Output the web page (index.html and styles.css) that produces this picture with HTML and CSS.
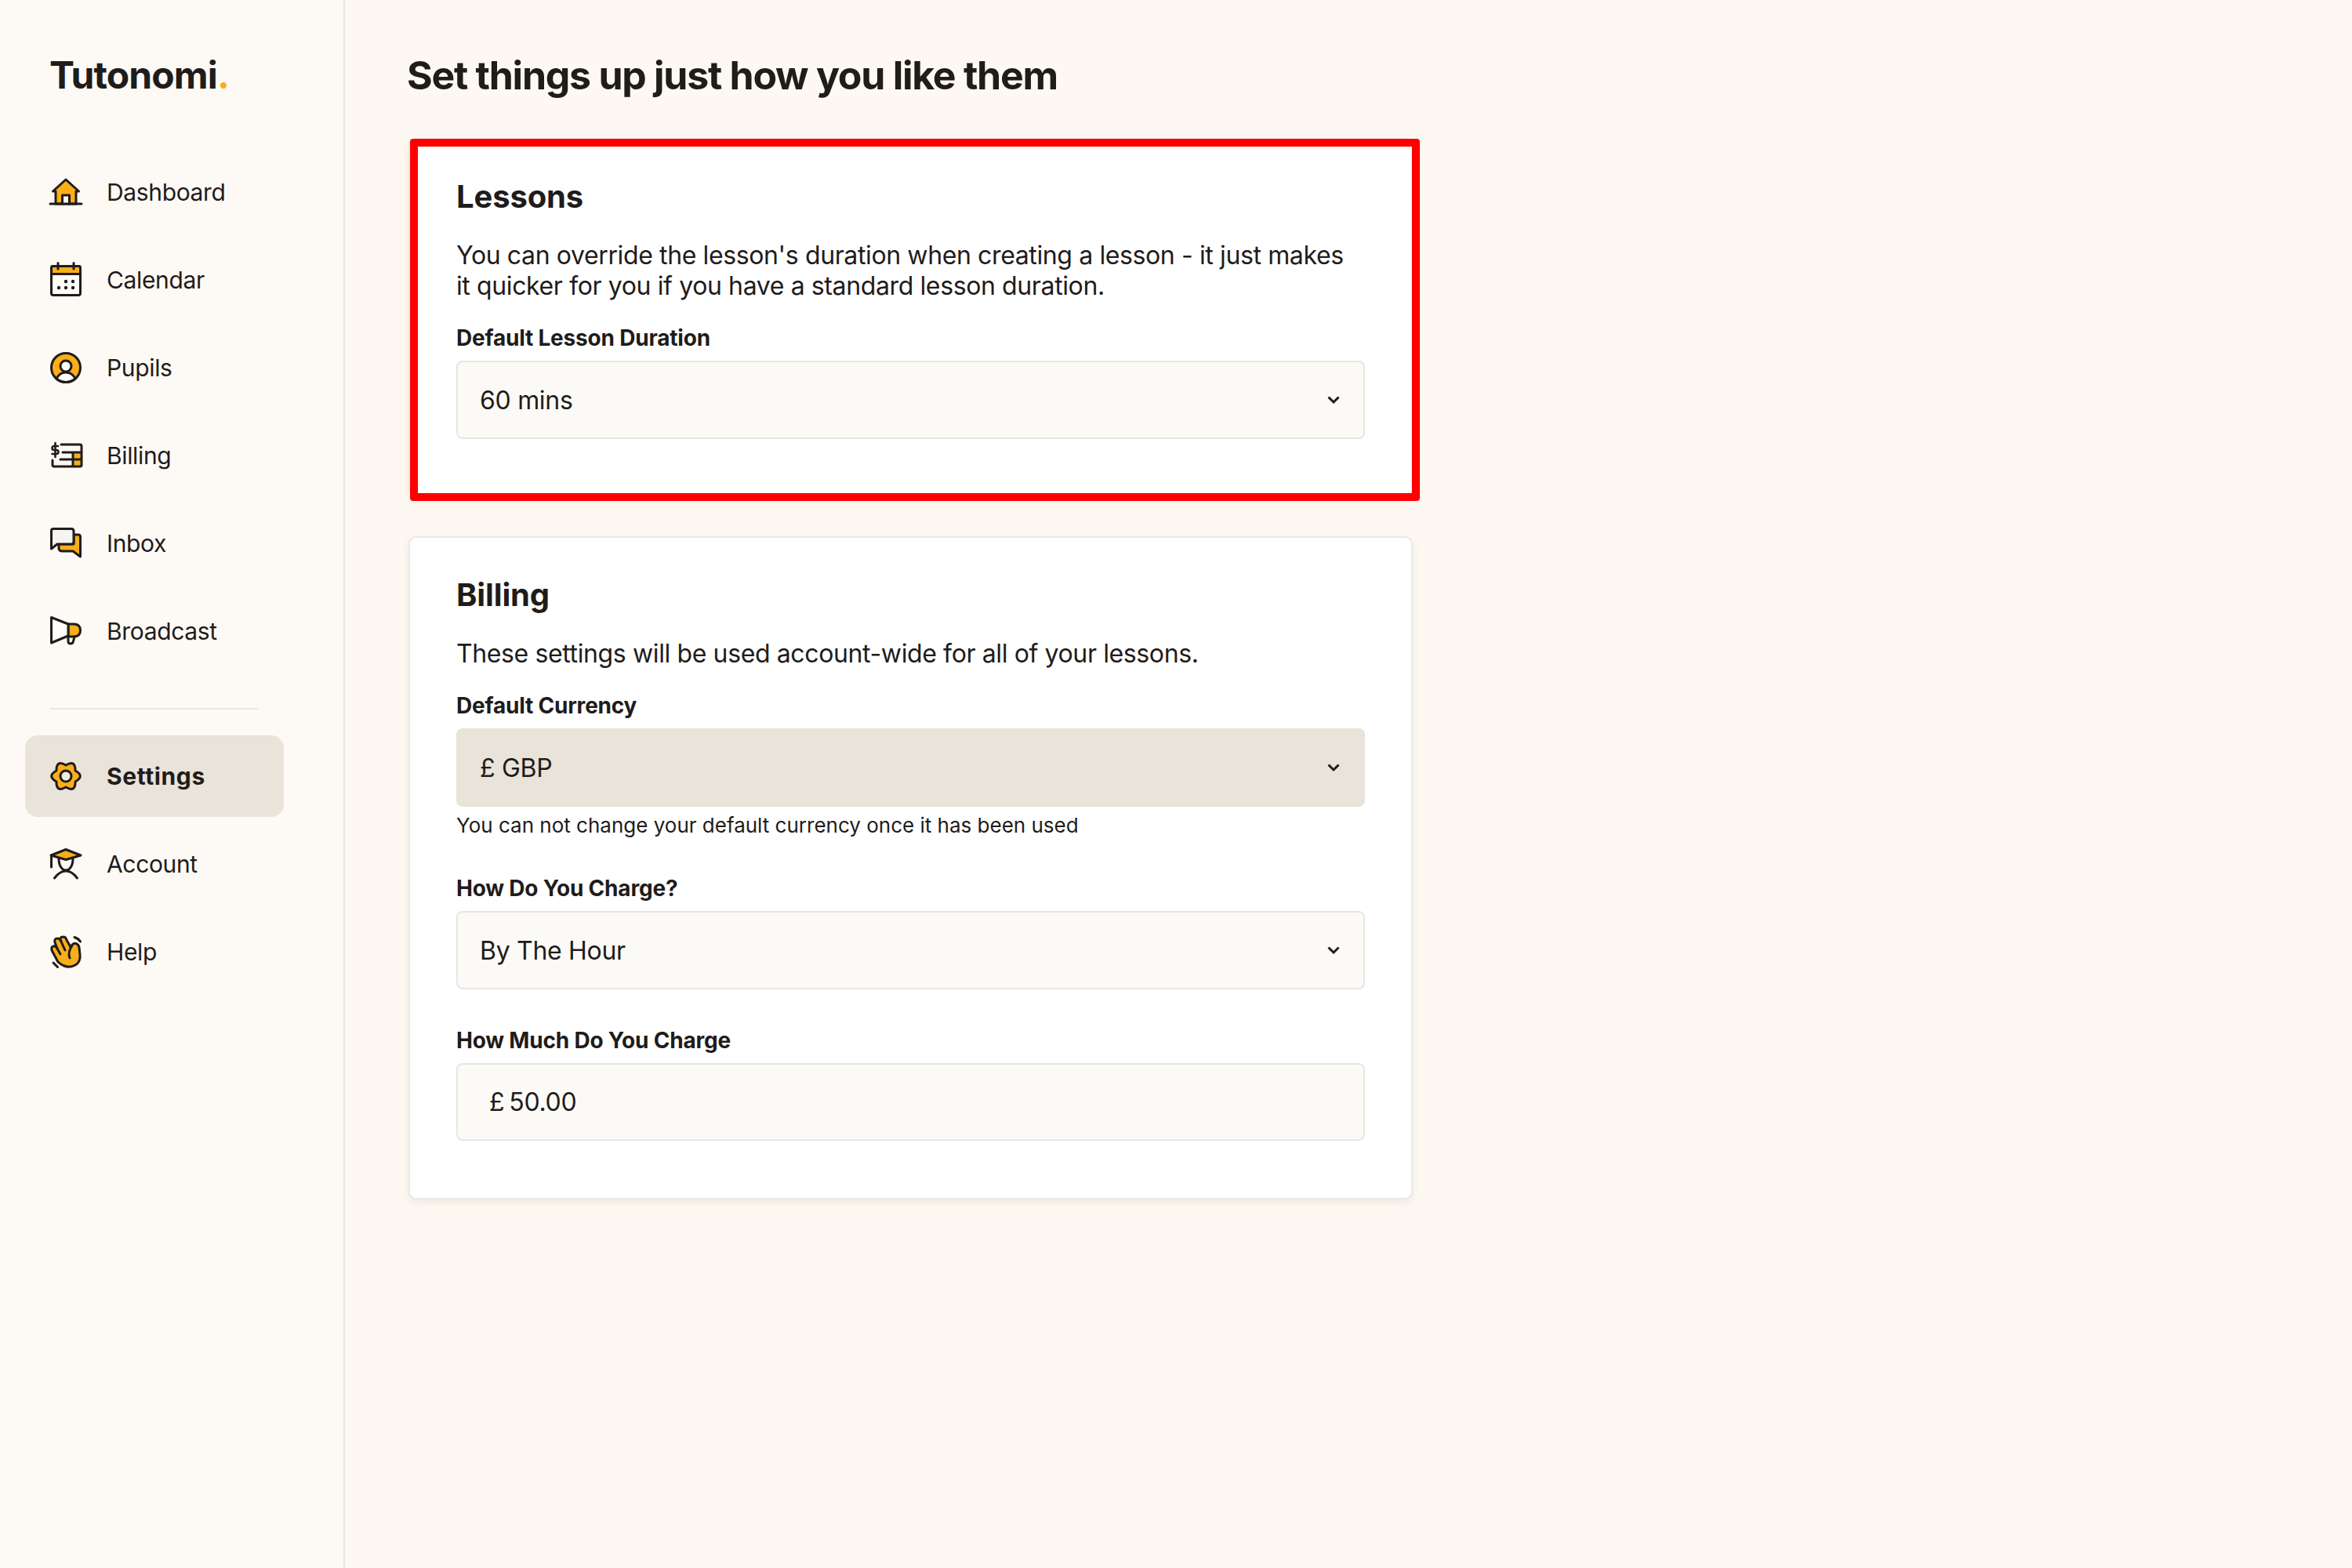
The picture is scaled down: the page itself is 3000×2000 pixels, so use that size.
FILE: index.html
```html
<!DOCTYPE html>
<html lang="en">
<head>
    <meta charset="UTF-8">
    <title>Tutonomi - Settings</title>
    <link rel="stylesheet" href="styles.css">
</head>
<body>
<aside class="sidebar">
    <div class="logo">Tutonomi<span class="logo-dot">.</span></div>
    <nav class="nav">
        <a class="nav-item">
            <svg class="nav-icon" viewBox="0 0 40 40">
                <path class="fill-o" d="M20 4 L3.5 19 H7 V35 H33 V19 H36.5 Z"/>
                <path class="fill-w" d="M15.5 35 V24 H24.5 V35"/>
                <path class="line" d="M0 35 H40"/>
            </svg>
            Dashboard
        </a>
        <a class="nav-item">
            <svg class="nav-icon" viewBox="0 0 40 40">
                <rect class="fill-w" x="1.5" y="2.5" width="37" height="37" rx="2.5"/>
                <path class="fill-o" d="M1.5 5 Q1.5 2.5 4 2.5 H36 Q38.5 2.5 38.5 5 V12.5 H1.5 Z"/>
                <path class="line" d="M10 -1.5 V6 M30 -1.5 V6"/>
                <circle class="dot" cx="20" cy="22" r="2.2"/>
                <circle class="dot" cx="29" cy="22" r="2.2"/>
                <circle class="dot" cx="11" cy="30" r="2.2"/>
                <circle class="dot" cx="20" cy="30" r="2.2"/>
                <circle class="dot" cx="29" cy="30" r="2.2"/>
            </svg>
            Calendar
        </a>
        <a class="nav-item">
            <svg class="nav-icon" viewBox="0 0 40 40">
                <circle class="fill-o" cx="20" cy="20" r="18.5"/>
                <path class="fill-w" d="M8 34 Q12 26 20 26 Q28 26 32 34 A18.5 18.5 0 0 1 8 34 Z"/>
                <circle class="fill-w" cx="20" cy="18" r="7"/>
            </svg>
            Pupils
        </a>
        <a class="nav-item">
            <svg class="nav-icon" viewBox="0 0 40 40">
                <rect class="solid-o" x="29" y="16" width="10.5" height="18"/>
                <path class="line" d="M14 6 H38 Q40 6 40 8 V32 Q40 34 38 34 H5 Q3 34 3 32 V26 M16 16 H40 M13 25 H40 M29 16 V34"/>
                <path class="line thin" d="M10 8 H5 Q2.5 8 2.5 10.5 Q2.5 13 5 13 H8 Q10.5 13 10.5 15.5 Q10.5 18 8 18 H2.5 M6.5 4 V22"/>
            </svg>
            Billing
        </a>
        <a class="nav-item">
            <svg class="nav-icon" viewBox="0 0 40 40">
                <path class="fill-o" d="M30 9 H36 Q38.5 9 38.5 12 V37 L29 30 H15 Q12 30 11 27 V21 H30 Z"/>
                <path class="fill-g" d="M4 1.5 H27 Q30 1.5 30 4.5 V18 Q30 21 27 21 H9 L1.5 27 V4 Q1.5 1.5 4 1.5 Z"/>
            </svg>
            Inbox
        </a>
        <a class="nav-item">
            <svg class="nav-icon" viewBox="0 0 40 40">
                <path class="fill-o" d="M23 11 H30 Q38.5 11 38.5 19 Q38.5 27 30 27 H23 Z"/>
                <path class="fill-w" d="M1.5 2.5 L23 11 V26 L1.5 35 Z"/>
                <path class="line" d="M23 26 V33 Q23 36 26 36 Q29 36 29.5 33 L31 27"/>
            </svg>
            Broadcast
        </a>
    </nav>
    <div class="nav-divider"></div>
    <nav class="nav">
        <a class="nav-item active">
            <svg class="nav-icon" viewBox="0 0 40 40">
                <path class="fill-o" d="M32.1 13 Q32.25 -1.2 20 6 Q7.75 -1.2 7.9 13 Q-4.5 20 7.9 27 Q7.75 41.2 20 34 Q32.25 41.2 32.1 27 Q44.5 20 32.1 13 Z"/>
                <circle class="fill-a" cx="20" cy="20" r="7"/>
            </svg>
            Settings
        </a>
        <a class="nav-item">
            <svg class="nav-icon" viewBox="0 0 40 40">
                <path class="line" d="M11 13 C11 33 29 33 29 13"/>
                <path class="fill-o" d="M20 1.5 L39 9 L20 14.5 L1 9 Z"/>
                <path class="line" d="M1.5 9 V24"/>
                <path class="line" d="M5.5 38 C10 32 15 29 20 29 C25 29 30 32 34.5 38"/>
            </svg>
            Account
        </a>
        <a class="nav-item">
            <svg class="nav-icon" viewBox="0 0 40 40">
                <path class="fill-o" d="M10 33 L3 20 Q0 14 4 13 Q7 12 9 16 L6 8 Q5 3 9 3 Q12 2.5 14 7 L13 4 Q13 0.5 17 1 Q20 1 21 5 L26 14 L28 11 Q31 8 34 10 Q37 12 37 15 L38 24 Q39 33 32 37 Q25 41 18 38 Q13 36 10 33 Z"/>
                <path class="line" d="M9 16 L13 23 M14 7 L19 18 M28 12 Q22 21 25 28"/>
                <path class="line" d="M31 1.5 Q36 3 38.5 7 M4 34 L9.5 39.5"/>
            </svg>
            Help
        </a>
    </nav>
</aside>

<main class="content">
    <h1 class="page-title">Set things up just how you like them</h1>

    <section class="card">
        <h2 class="card-title">Lessons</h2>
        <p class="card-text">You can override the lesson's duration when creating a lesson - it just makes it quicker for you if you have a standard lesson duration.</p>
        <div class="field">
            <label class="field-label">Default Lesson Duration</label>
            <div class="select">
                60 mins
                <svg class="chevron" viewBox="0 0 16 10"><path d="M1.5 1.5 L8 8 L14.5 1.5"/></svg>
            </div>
        </div>
        <div class="highlight"></div>
    </section>

    <section class="card">
        <h2 class="card-title">Billing</h2>
        <p class="card-text">These settings will be used account-wide for all of your lessons.</p>
        <div class="field">
            <label class="field-label">Default Currency</label>
            <div class="select disabled">
                £ GBP
                <svg class="chevron" viewBox="0 0 16 10"><path d="M1.5 1.5 L8 8 L14.5 1.5"/></svg>
            </div>
            <div class="field-hint">You can not change your default currency once it has been used</div>
        </div>
        <div class="field">
            <label class="field-label">How Do You Charge?</label>
            <div class="select">
                By The Hour
                <svg class="chevron" viewBox="0 0 16 10"><path d="M1.5 1.5 L8 8 L14.5 1.5"/></svg>
            </div>
        </div>
        <div class="field">
            <label class="field-label">How Much Do You Charge</label>
            <div class="select money">
                <span class="currency">£</span>50.00
            </div>
        </div>
    </section>
</main>
</body>
</html>
```

FILE: styles.css
```css
* {
    box-sizing: border-box;
}

body {
    display: flex;
    min-height: 100vh;
    margin: 0;
    background-color: #fdf8f2;
    color: #1f1c1a;
    font-family: "Inter", "Liberation Sans", sans-serif;
}

/* sidebar */
.sidebar {
    flex: none;
    width: 440px;
    padding-top: 66px;
    background-color: #fdf9f5;
    border-right: 2px solid #ebe6df;
}

.logo {
    margin-left: 63px;
    font-size: 48px;
    font-weight: 700;
    line-height: 60px;
    letter-spacing: -0.9px;
}

.logo-dot {
    color: #f9ae1a;
}

.nav {
    display: flex;
    flex-direction: column;
    gap: 8px;
    width: 330px;
    margin-left: 32px;
}

.logo + .nav {
    margin-top: 67px;
}

.nav-item {
    display: flex;
    align-items: center;
    height: 104px;
    padding-left: 32px;
    border-radius: 16px;
    font-size: 30px;
    letter-spacing: -0.35px;
}

.nav-item.active {
    background-color: #e9e3da;
    font-weight: 700;
    letter-spacing: 0.6px;
}

.nav-icon {
    flex: none;
    width: 40px;
    height: 40px;
    margin-right: 32px;
    overflow: visible;
}

.nav-divider {
    width: 266px;
    height: 2px;
    margin: 46px 0 33px 64px;
    background-color: #ebe6df;
}

/* icon parts */
.nav-icon path,
.nav-icon rect,
.nav-icon circle {
    stroke: #1f1c1a;
    stroke-width: 3;
    stroke-linejoin: round;
    stroke-linecap: round;
}

.nav-icon .line { fill: none; }
.nav-icon .thin { stroke-width: 2.6; }
.nav-icon .fill-o { fill: #f9ae1a; }
.nav-icon .fill-w { fill: #fffdfa; }
.nav-icon .fill-g { fill: #f6f4f0; }
.nav-icon .fill-a { fill: #efeae2; }
.nav-icon .solid-o { fill: #f9ae1a; stroke: none; }
.nav-icon .dot { fill: #1f1c1a; stroke: none; }

/* main column */
.content {
    flex: 1;
    padding: 66px 0 0 81px;
}

.page-title {
    margin: 0 0 50px -2px;
    font-size: 50px;
    font-weight: 700;
    line-height: 60px;
    letter-spacing: -1.27px;
}

.card {
    position: relative;
    width: 1281px;
    margin-bottom: 50px;
    padding: 51px 59px 72px;
    background-color: #fff;
    border: 2px solid #ebe8e2;
    border-radius: 10px;
    box-shadow: 0 4px 10px rgba(90, 70, 40, 0.08);
}

.card-title {
    margin: 0;
    font-size: 40px;
    font-weight: 700;
    line-height: 44px;
    letter-spacing: -0.15px;
}

.card-text {
    margin: 33px 0 0;
    padding-right: 20px;
    font-size: 32px;
    line-height: 39px;
    letter-spacing: -0.38px;
}

.field {
    margin-top: 47px;
}

.card-text + .field {
    margin-top: 29px;
}

.field-label {
    display: block;
    margin-bottom: 11px;
    font-size: 28px;
    font-weight: 700;
    line-height: 36px;
    letter-spacing: -0.2px;
}

.select {
    display: flex;
    align-items: center;
    justify-content: space-between;
    height: 100px;
    padding: 0 30px 0 28px;
    background-color: #fcfaf6;
    border: 2px solid #e8e6e1;
    border-radius: 8px;
    font-size: 32px;
    letter-spacing: -0.3px;
}

.select.disabled {
    background-color: #e9e3da;
    border-color: #e9e3da;
}

.select.money {
    justify-content: flex-start;
    height: 99px;
    margin-bottom: 1px;
    padding-left: 40px;
}

.currency {
    margin-right: 6px;
}

.chevron {
    width: 16px;
    height: 10px;
    overflow: visible;
}

.chevron path {
    fill: none;
    stroke: #1f1c1a;
    stroke-width: 3;
}

.field-hint {
    margin-top: 8px;
    font-size: 26px;
    line-height: 31px;
}

/* red marker drawn over the first card */
.highlight {
    position: absolute;
    top: -1px;
    left: 0;
    width: 1288px;
    height: 462px;
    border: 10px solid #ff0000;
    border-radius: 4px;
}
```
